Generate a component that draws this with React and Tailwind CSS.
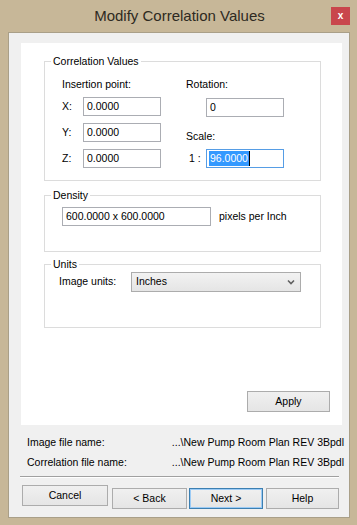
import React from 'react';

const font = "font-['Liberation_Sans',Arial,sans-serif]";

const TextBox = ({ value, className = '' }) => (
  <div
    className={`h-[19px] border border-[#abadb3] bg-white pl-[3px] flex items-center text-[10.5px] text-black ${className}`}
  >
    {value}
  </div>
);

const Group = ({ title, className = '', children }) => (
  <div className={`relative border border-[#dcdcdc] ${className}`}>
    <span className="absolute left-[6px] top-[-8px] bg-white px-[2px] text-[10.5px] leading-[14px] text-black">
      {title}
    </span>
    {children}
  </div>
);

const WinButton = ({ label, width, primary }) => (
  <button
    type="button"
    className={`h-[21px] ${width} border ${
      primary ? 'border-[#3c7fb1] shadow-[inset_0_0_0_1px_#9ccbf5]' : 'border-[#acacac]'
    } bg-gradient-to-b from-[#f0f0f0] to-[#e5e5e5] text-[10.5px] text-black`}
  >
    {label}
  </button>
);

export default function App() {
  return (
    <div className={`w-[357px] h-[525px] bg-[#c7b798] flex flex-col ${font}`}>
      {/* Title bar */}
      <div className="relative h-[32px] flex items-center justify-center">
        <span className="text-[15px] text-[#2e2a22] pl-[2px]">Modify Correlation Values</span>
        <div className="absolute left-[331px] top-[7px] w-[19px] h-[18px] bg-[#c9464c] flex items-center justify-center">
          <span className="text-white text-[10px] font-bold leading-none">x</span>
        </div>
      </div>

      {/* Client area */}
      <div className="ml-[8px] w-[342px] h-[486px] border border-[#a99f88] bg-[#f0f0f0] flex flex-col">
        {/* White panel */}
        <div className="ml-[12px] mt-[10px] w-[321px] h-[382px] bg-white flex flex-col pl-[23px] pr-[21px]">
          {/* Correlation values */}
          <Group title="Correlation Values" className="mt-[18px] h-[120px] flex pl-[17px] pt-[15px]">
            <div className="flex flex-col">
              <span className="text-[10.5px] leading-[14px] text-black">Insertion point:</span>
              <div className="mt-[6px] flex flex-col gap-[7px]">
                {['X:', 'Y:', 'Z:'].map((l) => (
                  <div key={l} className="flex items-center">
                    <span className="w-[21px] text-[10.5px] text-black">{l}</span>
                    <TextBox value="0.0000" className="w-[78px]" />
                  </div>
                ))}
              </div>
            </div>
            <div className="ml-[25px] flex flex-col">
              <span className="text-[10.5px] leading-[14px] text-black">Rotation:</span>
              <TextBox value="0" className="mt-[7px] ml-[20px] w-[78px]" />
              <span className="mt-[12px] text-[10.5px] leading-[14px] text-black">Scale:</span>
              <div className="mt-[6px] flex items-center">
                <span className="w-[20px] pl-[3px] text-[10.5px] text-black">1 :</span>
                <div className="h-[19px] w-[78px] border border-[#569de5] bg-white pl-[2px] flex items-center">
                  <span className="bg-[#3399ff] text-white text-[10.5px] leading-[15px] pl-[1px] pr-[1px]">96.0000</span>
                  <span className="w-[1px] h-[15px] bg-black" />
                </div>
              </div>
            </div>
          </Group>

          {/* Density */}
          <Group title="Density" className="mt-[14px] h-[57px] flex items-start pl-[17px] pt-[11px]">
            <TextBox value="600.0000 x 600.0000" className="w-[149px]" />
            <span className="ml-[8px] h-[19px] flex items-center text-[10.5px] text-black">pixels per Inch</span>
          </Group>

          {/* Units */}
          <Group title="Units" className="mt-[12px] h-[64px] flex items-start pl-[14px] pt-[7px]">
            <span className="h-[20px] w-[72px] flex items-center text-[10.5px] text-black">Image units:</span>
            <div className="h-[20px] w-[170px] border border-[#acacac] bg-gradient-to-b from-[#f2f2f2] to-[#e5e5e5] flex items-center justify-between pl-[4px] pr-[5px]">
              <span className="text-[10.5px] text-black">Inches</span>
              <svg width="8" height="6" viewBox="0 0 8 6">
                <path d="M1 1.5 L4 4.5 L7 1.5" fill="none" stroke="#606060" strokeWidth="1.6" />
              </svg>
            </div>
          </Group>

          <div className="flex-1" />
          <div className="flex justify-end mb-[13px] mr-[-9px]">
            <WinButton label="Apply" width="w-[83px]" />
          </div>
        </div>

        {/* File names */}
        <div className="mt-[8px] ml-[18px] mr-[5px] flex flex-col text-[10.5px] text-black">
          <div className="h-[20px] flex items-center justify-between">
            <span>Image file name:</span>
            <span>...\New Pump Room Plan REV 3Bpdl</span>
          </div>
          <div className="h-[20px] flex items-center justify-between">
            <span>Correlation file name:</span>
            <span>...\New Pump Room Plan REV 3Bpdl</span>
          </div>
        </div>

        <div className="mt-[3px] ml-[11px] w-[319px] border-t border-[#a0a0a0] border-b border-b-white h-[2px]" />

        {/* Buttons */}
        <div className="mt-[7px] ml-[13px] flex">
          <WinButton label="Cancel" width="w-[86px]" />
          <div className="ml-[4px]"><WinButton label="< Back" width="w-[75px]" /></div>
          <div className="ml-[2px]"><WinButton label="Next >" width="w-[74px]" primary /></div>
          <div className="ml-[3px]"><WinButton label="Help" width="w-[73px]" /></div>
        </div>
      </div>
    </div>
  );
}
